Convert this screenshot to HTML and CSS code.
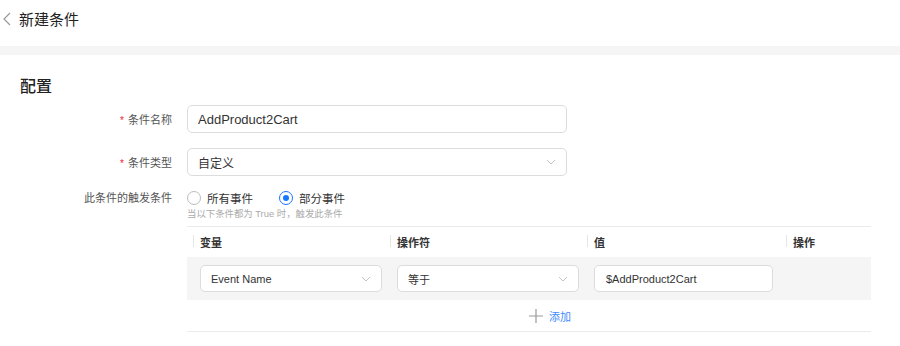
FILE: index.html
```html
<!DOCTYPE html>
<html lang="zh">
<head>
    <meta charset="UTF-8">
    <title>新建条件</title>
    <link rel="stylesheet" href="styles.css">
</head>
<body>
    <div class="page-header">
        <svg class="back-icon" viewBox="0 0 8 14" width="8" height="14"><path d="M7 1 1 7l6 6" fill="none" stroke="#999" stroke-width="1.2"/></svg>
        <span class="page-title">新建条件</span>
    </div>
    <div class="band"></div>

    <div class="section">
        <h2 class="section-title">配置</h2>

        <div class="form-row">
            <label class="form-label"><span class="req">*</span>条件名称</label>
            <div class="field"><div class="input latin big">AddProduct2Cart</div></div>
        </div>

        <div class="form-row">
            <label class="form-label"><span class="req">*</span>条件类型</label>
            <div class="field"><div class="input select">自定义<svg class="caret" viewBox="0 0 10 6" width="10" height="6"><path d="M1 1l4 4 4-4" fill="none" stroke="#c4c4c4"/></svg></div></div>
        </div>

        <div class="form-row radio-row">
            <label class="form-label">此条件的触发条件</label>
            <div class="field">
                <div class="radios">
                    <span class="radio"><i class="dot"></i>所有事件</span>
                    <span class="radio checked"><i class="dot"></i>部分事件</span>
                </div>
                <p class="hint">当以下条件都为 True 时，触发此条件</p>

                <div class="rule-table">
                    <div class="rule-head">
                        <div class="th">变量</div>
                        <div class="th">操作符</div>
                        <div class="th">值</div>
                        <div class="th">操作</div>
                    </div>
                    <div class="rule-row">
                        <div class="td"><div class="input select small latin">Event Name<svg class="caret" viewBox="0 0 10 6" width="10" height="6"><path d="M1 1l4 4 4-4" fill="none" stroke="#c4c4c4"/></svg></div></div>
                        <div class="td"><div class="input select small">等于<svg class="caret" viewBox="0 0 10 6" width="10" height="6"><path d="M1 1l4 4 4-4" fill="none" stroke="#c4c4c4"/></svg></div></div>
                        <div class="td"><div class="input small latin">$AddProduct2Cart</div></div>
                        <div class="td"></div>
                    </div>
                    <div class="add-row">
                        <svg class="plus" viewBox="0 0 14 14" width="14" height="14"><path d="M7 0v14M0 7h14" stroke="#999" stroke-width="1.2"/></svg>
                        <span class="add-text">添加</span>
                    </div>
                </div>
            </div>
        </div>
    </div>
</body>
</html>
```

FILE: styles.css
```css
/* --- Global Setup --- */
body, html {
    margin: 0;
    padding: 0;
    background-color: #fff;
    font-family: 'Liberation Sans', 'Noto Sans CJK SC', sans-serif;
    color: #333;
}

/* --- Header --- */
.page-header {
    height: 36px; display: flex; align-items: center;
    padding: 0 0 10px 3px;
}
.back-icon { margin-right: 8px; margin-top: 1px; }
.page-title { font-size: 15px; color: #222; }
.band { height: 9px; background-color: #f5f5f5; }

/* --- Section --- */
.section { padding: 20px 20px 0 20px; }
.section-title {
    margin: 0 0 6px 0; font-size: 16px; font-weight: 500;
    line-height: 24px; color: #222;
}

.form-row { display: flex; align-items: center; margin-bottom: 15px; }
.form-label {
    width: 152px; padding-right: 15px; text-align: right;
    font-size: 11px; color: #555; flex-shrink: 0;
}
.req { color: #f5222d; margin-right: 4px; font-size: 10px; }

.field { flex: 1; }
.input {
    box-sizing: border-box; width: 380px; height: 28px;
    border: 1px solid #dcdcdc; border-radius: 5px;
    display: flex; align-items: center; padding: 0 10px;
    font-size: 12px; color: #333; background: #fff;
}
.input.big { font-size: 13px; }
.select { justify-content: space-between; }
.caret { flex-shrink: 0; }

/* radio row */
.radio-row { align-items: flex-start; margin-top: 1px; }
.radio-row .form-label { line-height: 14px; }
.radios { display: flex; gap: 26px; height: 14px; align-items: center; }
.radio { display: flex; align-items: center; gap: 6px; font-size: 11.5px; color: #333; }
.dot {
    box-sizing: border-box; width: 14px; height: 14px;
    border: 1px solid #bbb; border-radius: 50%; display: block;
}
.radio.checked .dot { border-color: #1677ff; position: relative; }
.radio.checked .dot::after {
    content: ''; position: absolute; left: 3px; top: 3px;
    width: 6px; height: 6px; border-radius: 50%; background: #1677ff;
}
.hint { margin: 3px 0 6px 0; font-size: 9.4px; color: #aaa; line-height: 12px; }

/* --- Rule table --- */
.rule-table { width: 684px; border-top: 1px solid #ebebeb; }
.rule-head, .rule-row { display: grid; grid-template-columns: 197px 197px 199px 1fr; }
.rule-head { height: 30px; align-items: center; }
.th {
    font-size: 11px; font-weight: bold; color: #333;
    padding-left: 13px; position: relative;
}
.th::before {
    content: ''; position: absolute; left: 6px; top: 1px;
    width: 1px; height: 12px; background: #e5e5e5;
}
.rule-row { height: 43px; align-items: center; background: #f5f5f5; }
.td { padding-left: 13px; }
.input.small { width: 182px; height: 27px; font-size: 11px; }
.td:nth-child(3) .input.small { width: 179px; padding-left: 11px; }
.latin { font-family: 'Liberation Sans', sans-serif; }

.add-row {
    height: 31px; display: flex; align-items: center; justify-content: center;
    gap: 6px; border-bottom: 1px solid #ebebeb; padding-left: 42px;
}
.add-text { color: #3d8bff; font-size: 11px; }
```
